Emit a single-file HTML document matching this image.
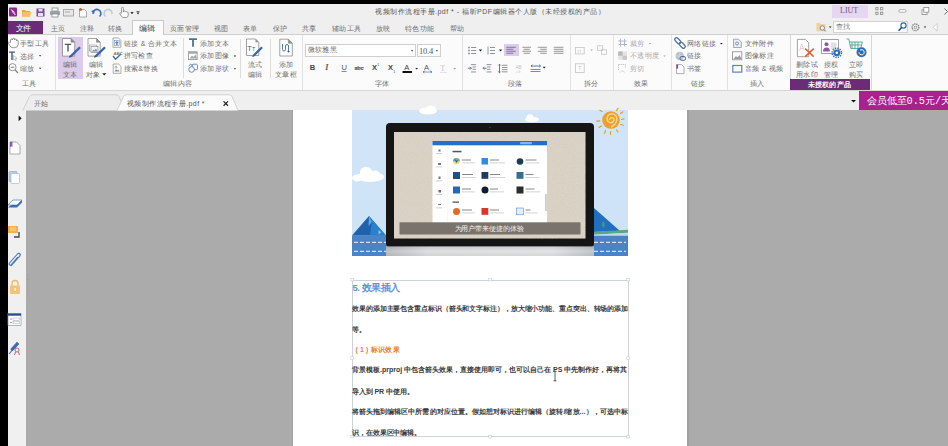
<!DOCTYPE html>
<html><head><meta charset="utf-8">
<style>
*{margin:0;padding:0;box-sizing:border-box}
html,body{width:948px;height:446px;overflow:hidden;background:#000;font-family:"Liberation Sans",sans-serif;position:relative}
.a{position:absolute}
.t{position:absolute;white-space:nowrap;font-size:7px;line-height:10px;letter-spacing:0.4px;color:#6e6e6e}
.sep{position:absolute;width:1px;background:#dcdcdc}
svg{position:absolute;overflow:visible}
.bt{left:352px;color:#3a3a3a;font-weight:bold;letter-spacing:-0.1px}
</style></head><body>
<!-- title bar + tab row bg -->
<div class="a" style="left:8px;top:4px;width:940px;height:30px;background:#efefef"></div>
<!-- ribbon -->
<div class="a" style="left:8px;top:34px;width:940px;height:57px;background:#fbfbfb;border-top:1px solid #cfcfcf;border-bottom:1px solid #d6d6d6"></div>
<!-- doc tab row -->
<div class="a" style="left:8px;top:91px;width:940px;height:19px;background:#efefef"></div>
<!-- sidebar -->
<div class="a" style="left:8px;top:110px;width:18px;height:336px;background:#f0f0f0"></div>
<!-- gray doc area -->
<div class="a" style="left:26px;top:110px;width:922px;height:336px;background:#ababab"></div>
<!-- page -->
<div class="a" style="left:292px;top:110px;width:1px;height:336px;background:#a2a2a2"></div>
<div class="a" style="left:687px;top:110px;width:2px;height:336px;background:#a0a0a0"></div>
<div class="a" style="left:293px;top:110px;width:394px;height:336px;background:#fff"></div>

<!-- TITLE -->
<div class="t" style="left:375px;top:7px;color:#555;letter-spacing:0.5px">视频制作流程手册.pdf * - 福昕PDF编辑器个人版（未经授权的产品）</div>

<!-- TABS -->
<div class="a" style="left:8px;top:21px;width:35px;height:13px;background:#6c2b77"></div>
<div class="t" style="left:15.5px;top:24px;color:#fff;font-size:8px;font-weight:500;letter-spacing:-0.6px">文件</div>
<div class="a" style="left:132px;top:20px;width:32px;height:15px;background:#fbfbfb;border:1px solid #c8c8c8;border-bottom:none"></div>
<div class="t" style="left:51px;top:24px">主页</div>
<div class="t" style="left:80px;top:24px">注释</div>
<div class="t" style="left:108px;top:24px">转换</div>
<div class="t" style="left:139px;top:23.5px;color:#444;font-size:8px;letter-spacing:0">编辑</div>
<div class="t" style="left:170px;top:24px">页面管理</div>
<div class="t" style="left:214px;top:24px">视图</div>
<div class="t" style="left:243px;top:24px">表单</div>
<div class="t" style="left:273px;top:24px">保护</div>
<div class="t" style="left:302px;top:24px">共享</div>
<div class="t" style="left:332px;top:24px">辅助工具</div>
<div class="t" style="left:376px;top:24px">放映</div>
<div class="t" style="left:405px;top:24px">特色功能</div>
<div class="t" style="left:450px;top:24px">帮助</div>



<!-- PAGE IMAGE -->
<svg style="left:0;top:0" width="948" height="446">
 <defs>
  <linearGradient id="sky" x1="0" y1="0" x2="0" y2="1"><stop offset="0" stop-color="#d2e5f8"/><stop offset="1" stop-color="#cde2f6"/></linearGradient>
  <linearGradient id="stand" x1="0" y1="0" x2="0" y2="1"><stop offset="0" stop-color="#b9bcc0"/><stop offset=".5" stop-color="#e2e4e6"/><stop offset="1" stop-color="#c8cacc"/></linearGradient>
  <linearGradient id="standx" x1="0" y1="0" x2="1" y2="0"><stop offset="0" stop-color="#9a9ea4"/><stop offset=".2" stop-color="#d8dadc"/><stop offset=".8" stop-color="#e0e2e4"/><stop offset="1" stop-color="#a8acb0"/></linearGradient>
 </defs>
 <rect x="352" y="110" width="276" height="146" fill="url(#sky)"/>
 <!-- clouds -->
 <g fill="#fff">
  <ellipse cx="428" cy="111" rx="9" ry="3.5"/><ellipse cx="431" cy="109" rx="5" ry="3.5"/>
  <ellipse cx="532" cy="119.5" rx="7" ry="2.8"/><ellipse cx="530" cy="117.5" rx="3.5" ry="3.2"/>
  <ellipse cx="370" cy="177" rx="14" ry="5"/><ellipse cx="366" cy="172" rx="6" ry="5"/><ellipse cx="375" cy="174.5" rx="5" ry="4"/><ellipse cx="357" cy="178" rx="5" ry="3.5"/>
 </g>
 <!-- sun -->
 <g stroke="#d8a030" stroke-width="1.2" fill="none" stroke-linecap="round">
  <path d="M602 111.5 l-2.2-1.2 M599.8 120.8 l-3 .4 M601.5 126 l-2.5 1.5 M605.5 130.5 l-1 2.8 M610.5 131.5 v2.8 M616.5 130 l1.5 2 M620.8 124.5 l2.5 .8 M621.5 119.5 l2.5-.6 M620.5 113.5 l2.3-1.6 M616.5 110.5 l1.5-2.2"/>
 </g>
 <circle cx="611" cy="120" r="8.8" fill="#eba12b"/>
 <path d="M609.5 120 q.5-2.8 3-2.2 q2.5.8 1.2 3.2 q-1.8 2.8-4.8 1 q-3-2-1.2-5.8 q2-3.5 6-2 q3.8 1.8 3 6 q-.8 4.5-5.5 6.8" fill="none" stroke="#fbd98c" stroke-width="1.4"/>
 <!-- water strip -->
 <rect x="352" y="235.5" width="276" height="20.5" fill="#4a84c6"/>
 <path d="M354 242.3 h272 M354 251.3 h272" stroke="#f4f8ff" stroke-width="1" stroke-dasharray="4 2"/>
 <!-- mountains -->
 <path d="M352 235.5 L369 216 L386 235.5z" fill="#1f62ac"/>
 <path d="M369 216 L372 222 L370 235.5 L386 235.5z" fill="#2b80cc"/>
 <path d="M369 216 L372 222 L368.5 226z" fill="#58a8e8"/>
 <path d="M378.5 230 v4.5 l3-2.2z" fill="#8cc4f0"/>
 <path d="M594 208 L620 231 L594 232z" fill="#1f70c0"/>
 <ellipse cx="603.3" cy="224.5" rx="1.5" ry="3" fill="#5a9a80" opacity=".7"/>
 <path d="M594 231.8 L628 229.8 L628 232.8 L594 234.8z" fill="#5aa882"/>
 <path d="M594 234.8 L628 232.8 L628 235.5 L594 235.5z" fill="#b8dcea"/>
 <!-- monitor -->
 <rect x="386" y="123" width="208" height="124" rx="4" fill="#151515"/>
 <rect x="394" y="132" width="191.5" height="106.5" fill="#dbd3c6"/>
 <filter id="paper" x="0" y="0" width="100%" height="100%"><feTurbulence type="fractalNoise" baseFrequency=".9" numOctaves="2" seed="3"/><feColorMatrix values="0 0 0 0 .55  0 0 0 0 .5  0 0 0 0 .42  0 0 0 -1.2 .75"/></filter>
 <rect x="394" y="132" width="191.5" height="106.5" filter="url(#paper)" opacity=".45"/>
 <circle cx="490" cy="127.5" r=".8" fill="#444"/>
 <rect x="386" y="246.5" width="208" height="9.5" fill="url(#standx)"/>
 <rect x="386" y="246.5" width="208" height="9.5" fill="url(#stand)" opacity=".5"/>
 <!-- app window -->
 <rect x="432.5" y="141" width="114.5" height="90" fill="#fff"/>
 <rect x="432.5" y="141" width="114.5" height="4.3" fill="#2470c8"/>
 <rect x="520" y="142" width="12" height="2.3" rx="1" fill="#8ab4e4"/>
 <rect x="447" y="145.3" width=".5" height="80" fill="#f0f0f0"/>
 <g fill="#777">
  <rect x="438.5" y="149.5" width="2" height="2"/><rect x="438" y="163" width="3" height="2"/><rect x="438.5" y="176.5" width="2" height="2.5"/><rect x="438.5" y="190" width="2.5" height="2.5" fill="#9a4a8a"/><rect x="438" y="204" width="3" height="1"/>
 </g>
 <g fill="#c4c4c4">
  <rect x="436" y="153" width="6" height=".8"/><rect x="436" y="166.5" width="6" height=".8"/><rect x="436" y="180.5" width="6" height=".8"/><rect x="436" y="194" width="6" height=".8"/><rect x="436" y="207.5" width="6" height=".8"/>
 </g>
 <rect x="452.5" y="150.8" width="9" height="1.5" fill="#555"/>
 <rect x="452.5" y="201.5" width="6.5" height="1.3" fill="#555"/>
 <g>
  <circle cx="456.5" cy="161.3" r="3.3" fill="#e8d890"/><path d="M456.5 158 a3.3 3.3 0 0 1 3.3 3.3 h-3.3z" fill="#6ab86a"/><path d="M453.2 161.3 a3.3 3.3 0 0 1 3.3-3.3 v3.3z" fill="#3a9ad8"/><path d="M455 160.5 l3 0 l-1.5 2.5z" fill="#555"/>
  <rect x="481.5" y="158" width="6.5" height="6.5" fill="#2b8ee0"/>
  <circle cx="520" cy="161.5" r="3.3" fill="#1e3a50"/>
  <rect x="453" y="172" width="7" height="7" fill="#1f4f8a"/>
  <rect x="481.5" y="172" width="6.8" height="6.8" fill="#223a5c"/>
  <rect x="516.5" y="172" width="7" height="6.8" fill="#3a6c8c"/>
  <rect x="453" y="186.5" width="7" height="7" fill="#1f6ac0"/>
  <circle cx="485" cy="190" r="3.5" fill="#101c30"/>
  <rect x="516.5" y="186.5" width="7" height="7" fill="#2a2e2a"/>
  <circle cx="456.5" cy="211.5" r="3.5" fill="#e86a20"/>
  <rect x="481.5" y="208" width="6.8" height="6.8" fill="#d8382a"/>
  <rect x="516.5" y="208" width="7" height="6.8" fill="#e8eef8" stroke="#3a7ad0" stroke-width=".5"/>
 </g>
 <g fill="#888">
  <rect x="462" y="159.5" width="9" height="1"/><rect x="490" y="159.5" width="9" height="1"/><rect x="525.5" y="159.5" width="11" height="1"/>
  <rect x="462" y="174" width="11" height="1"/><rect x="490" y="174" width="10" height="1"/><rect x="525.5" y="174" width="8" height="1"/>
  <rect x="462" y="188.5" width="9" height="1"/><rect x="490" y="188.5" width="8" height="1"/><rect x="525.5" y="188.5" width="9" height="1"/>
  <rect x="462" y="209.5" width="10" height="1"/><rect x="490" y="209.5" width="9" height="1"/><rect x="525.5" y="209.5" width="5" height="1"/>
 </g>
 <g fill="#c8c8c8">
  <rect x="462" y="162.5" width="13" height=".8"/><rect x="490" y="162.5" width="15" height=".8"/><rect x="525.5" y="162.5" width="14" height=".8"/>
  <rect x="462" y="177" width="14" height=".8"/><rect x="490" y="177" width="15" height=".8"/><rect x="525.5" y="177" width="14" height=".8"/>
  <rect x="462" y="191.5" width="13" height=".8"/><rect x="490" y="191.5" width="14" height=".8"/><rect x="525.5" y="191.5" width="15" height=".8"/>
  <rect x="462" y="212.5" width="13" height=".8"/><rect x="490" y="212.5" width="14" height=".8"/><rect x="525.5" y="212.5" width="12" height=".8"/>
 </g>
 <rect x="545.5" y="194" width=".9" height="17" fill="#999"/>
 <!-- caption -->
 <rect x="399.5" y="222.3" width="181" height="12.2" fill="#7a736b"/>
</svg>
<div class="t" style="left:454.5px;top:224px;color:#f4f2ee;font-size:7px;letter-spacing:-0.1px">为用户带来便捷的体验</div>

<!-- TEXT BLOCK -->
<div class="a" style="left:352px;top:279.5px;width:277px;height:157.5px;border:1px solid #cdd1d8"></div>
<svg style="left:0;top:0" width="948" height="446">
 <g fill="#fff" stroke="#c4c8ce" stroke-width=".6">
  <rect x="350.8" y="278.3" width="2.6" height="2.6"/><rect x="488.8" y="278.3" width="2.6" height="2.6"/><rect x="626.8" y="278.3" width="2.6" height="2.6"/>
  <rect x="350.8" y="356.8" width="2.6" height="2.6"/><rect x="626.8" y="356.8" width="2.6" height="2.6"/>
  <rect x="350.8" y="435.3" width="2.6" height="2.6"/><rect x="488.8" y="435.3" width="2.6" height="2.6"/><rect x="626.8" y="435.3" width="2.6" height="2.6"/>
 </g>
 <path d="M553.5 371.3 h3 M553.5 380.8 h3 M555 371.3 v9.5" stroke="#333" stroke-width=".8"/>
</svg>
<div class="t" style="left:352.5px;top:283px;color:#5e94d6;font-size:9.5px;font-weight:bold;letter-spacing:-0.5px">5. 效果插入</div>
<div class="t bt" style="top:304px">效果的添加主要包含重点标识（箭头和文字标注），放大缩小功能、重点突出、转场的添加</div>
<div class="t bt" style="top:324.5px">等。</div>
<div class="t" style="left:355.5px;top:344.5px;color:#e8802e;font-weight:bold;letter-spacing:0.3px"><span style="letter-spacing:2.2px">(1)</span>标识效果</div>
<div class="t bt" style="top:365px;letter-spacing:0px">背景模板.prproj 中包含箭头效果，直接使用即可，也可以自己在 PS 中先制作好，再将其</div>
<div class="t bt" style="top:386.5px">导入到 PR 中使用。</div>
<div class="t bt" style="top:407px;letter-spacing:0.05px">将箭头拖到编辑区中所需的对应位置。假如想对标识进行编辑（旋转/缩放...），可选中标</div>
<div class="t bt" style="top:428px">识，在效果区中编辑。</div>

<!-- QUICK ACCESS -->
<svg style="left:0;top:0" width="150" height="20">
 <rect x="9" y="7.5" width="8" height="9" rx="1" fill="#8a2b8c"/>
 <path d="M10.5 8.8 q3.5 1.5 5.2 5.8 l-.6 .6 q-3-2.2-4.6-6.4z" fill="#fff"/><path d="M11 9.5 l4.2 5" stroke="#8a2b8c" stroke-width=".4"/>
 <path d="M22 10 h3 l1 1 h4 v5.5 h-8z" fill="#e8a440"/>
 <path d="M22.5 12 h9 l-1.5 4.5 h-8z" fill="#f6c060"/>
 <rect x="36.5" y="8.5" width="8" height="8" fill="#7b4a92"/>
 <rect x="38.5" y="9" width="4" height="2.5" fill="#e8e0ee"/>
 <rect x="38" y="13" width="5" height="3" fill="#e8e0ee"/>
 <rect x="52" y="8" width="6" height="3" fill="#fff" stroke="#8a8a8a" stroke-width=".8"/>
 <rect x="50" y="11" width="10" height="4" rx="1" fill="#9aa0a8"/>
 <rect x="52" y="14" width="6" height="3" fill="#fff" stroke="#8a8a8a" stroke-width=".8"/>
 <rect x="63.5" y="9.5" width="10" height="6.5" fill="#e8e8e8" stroke="#9a9a9a" stroke-width=".8"/>
 <rect x="65" y="11" width="5" height="2" fill="#c8c8c8"/>
 <path d="M79.5 9.5 h5 l2 2 v5.5 h-7z" fill="#fff" stroke="#888" stroke-width=".7"/>
 <circle cx="80.5" cy="9.5" r="1.6" fill="#e0603a"/>
 <path d="M93 14 a4 4 0 1 1 6.5 2.5" fill="none" stroke="#3a6fb0" stroke-width="1.6"/>
 <path d="M91 11 l3 -1 l0.5 3.5z" fill="#3a6fb0"/>
 <path d="M112 14 a4 4 0 1 0 -6.5 2.5" fill="none" stroke="#c0c8d4" stroke-width="1.6"/>
 <path d="M121.6 12.5 v-4.2 q0-1 .9-1 q.9 0 .9 1 v3.7 l.3-.6 q.8-.6 1.5 0 l.2.4 q.8-.5 1.4.1 l.2.3 q.9-.3 1.2.5 v2.5 q0 2.3-2.3 2.3 h-2.2 q-1.4 0-2.2-1.2 l-1.6-2.4 q-.4-.8.3-1 q.6-.2 1.1.4z" fill="#fff" stroke="#777" stroke-width=".75"/>
 <path d="M130.5 12 h3 l-1.5 2z" fill="#333"/>
 <path d="M136.5 12.5 h3 l-1.5 2z" fill="#333"/>
 <rect x="136.5" y="11" width="3" height=".7" fill="#333"/>
</svg>


<div class="a" style="left:58px;top:37px;width:25px;height:42px;background:#dccbe9"></div>
<div class="a" style="left:504px;top:44px;width:15px;height:12px;background:#dccbe9"></div>
<div class="a" style="left:305px;top:43.5px;width:111px;height:13px;background:#fff;border:1px solid #cfcfcf"></div>
<div class="a" style="left:416.5px;top:43.5px;width:24px;height:13px;background:#fff;border:1px solid #cfcfcf"></div>
<!-- RIBBON ICONS -->
<svg style="left:0;top:0" width="948" height="112">
 <g fill="none" stroke="#7a7a7a" stroke-width=".8">
  <!-- hand -->
  <path d="M10.5 42.5 v-2.5 q0-1 1-1 q1 0 1 1 v-0.8 q0-1 1-1 q1 0 1 1 v0.8 q0-1 1-1 q1 0 1 1 v1 q0-.8 .8-.8 q.9 0 .9 1 v3 q0 3.5-3.8 3.5 h-1.5 q-2 0-3-2 l-1.5-2.5 q-.4-.9 .4-1.1 q.7-.1 1.2.6z" fill="#fff"/>
  <!-- magnifier -->
  <circle cx="12.5" cy="67.2" r="3.6"/>
  <path d="M10.8 67.2 h3.4 M15.2 70 l2.8 3" stroke-width="1.1"/>
 </g>
 <path d="M9 51.5 h6 v1.3 h-2.3 v7.2 h-1.4 v-7.2 h-2.3z" fill="#3d5c8c"/>
 <path d="M13.5 55.5 l3.5 2.8 l-1.5.3 l.8 1.5 l-.8.4 l-.8-1.5 l-1.2 .9z" fill="#fff" stroke="#888" stroke-width=".5"/>
 <!-- dropdown arrows -->
 <g fill="#222">
  <path d="M38.8 55.3 h2.6 l-1.3 1.3z"/><path d="M38.8 67.8 h2.6 l-1.3 1.3z"/>
  <path d="M102.2 73.2 h4.2 l-2.1 2.4z"/>
  <path d="M233.7 55.6 h2.5 l-1.25 1.3z"/><path d="M233.7 68.2 h2.5 l-1.25 1.3z"/>
  <path d="M410.8 50.2 h2.7 l-1.35 1.4z"/><path d="M435.5 50.2 h2.7 l-1.35 1.4z"/>
  <path d="M415.2 68 h3 l-1.5 1.5z"/><path d="M453.4 68 h2.7 l-1.35 1.4z" fill="#999"/>
  <path d="M478.8 49.6 h3.3 l-1.65 1.9z"/><path d="M498.9 49.6 h3.3 l-1.65 1.9z"/>
  <path d="M542.7 66.8 h3 l-1.5 1.7z"/>
  <path d="M590.2 49.6 h2.8 l-1.4 1.5z" fill="#aaa"/>
  <path d="M648.8 43 h2.5 l-1.25 1.3z" fill="#999"/><path d="M663.3 55.5 h2.5 l-1.25 1.3z" fill="#999"/>
  <path d="M720 43 h2.6 l-1.3 1.4z"/>
  <path d="M130.5 12 h3 l-1.5 2z" fill="#333"/>
 </g>
 <!-- edit text big icon -->
 <path d="M62.5 38.5 h8.5 l3.7 3.7 v13.9 h-12.2z" fill="#fff" stroke="#8a8a8a" stroke-width=".8"/>
 <path d="M71 38.5 v3.7 h3.7z" fill="#8a8a8a" stroke="#8a8a8a" stroke-width=".6"/>
 <path d="M64.8 43.8 h6.4 v1.3 h-2.5 v6.4 h-1.4 v-6.4 h-2.5z" fill="#555"/>
 <path d="M79.2 46.4 l1.7 1.7 l-9.2 8.8 l-2.3 .7 l.7-2.3z" fill="#3d64a8"/><path d="M69.1 57.6 l.5-1.7 l1.2 1.2z" fill="#333"/>
 <!-- edit object big icon -->
 <path d="M88 38.5 h8.5 l3.7 3.7 v13.9 h-12.2z" fill="#fff" stroke="#8a8a8a" stroke-width=".8"/>
 <path d="M96.5 38.5 v3.7 h3.7z" fill="#8a8a8a" stroke="#8a8a8a" stroke-width=".6"/>
 <rect x="89.5" y="45" width="7" height="6" fill="#fff" stroke="#9a9a9a" stroke-width=".7"/>
 <rect x="91" y="46.5" width="7" height="6" fill="#f4f4f4" stroke="#8a8a8a" stroke-width=".7"/>
 <path d="M92 51.5 l1.5-2 l1 1 l1.5-2 l1.5 3z" fill="#6a8fb8"/>
 <path d="M104.2 46.4 l1.7 1.7 l-9.2 8.8 l-2.3 .7 l.7-2.3z" fill="#3d64a8"/><path d="M94.1 57.6 l.5-1.7 l1.2 1.2z" fill="#333"/>
 <!-- link & merge -->
 <path d="M113 38 h5.5 l2.3 2.3 v7 h-7.8z" fill="#fff" stroke="#8a8a8a" stroke-width=".7"/>
 <rect x="114.6" y="40.6" width="4.6" height="5" fill="#fff" stroke="#6a8ab8" stroke-width=".6"/>
 <path d="M116.9 41 l2 2 h-1.3 v2 h-1.4 v-2 h-1.3z" fill="#4a78b8"/>
 <!-- spell check -->
 <text x="113.5" y="54.5" font-size="4.2" font-family="Liberation Sans" fill="#777" font-weight="bold">ABC</text>
 <path d="M113 56 l2.5 3.2 l5.5-5.2" fill="none" stroke="#3d6aa8" stroke-width="1.3"/>
 <!-- search replace -->
 <path d="M113.2 64 h5.5 l2.3 2.3 v7 h-7.8z" fill="#fff" stroke="#8a8a8a" stroke-width=".7"/>
 <path d="M114.5 71.5 l1.5-2.5 l1.2 1.5 l1-1 l1.5 2z" fill="#888"/>
 <circle cx="116" cy="67.2" r="1" fill="none" stroke="#777" stroke-width=".6"/>
 <!-- T add text -->
 <path d="M189 38.3 h8 v1.7 h-3.1 v6.8 h-1.8 v-6.8 h-3.1z" fill="#4f6f98"/>
 <!-- add image -->
 <rect x="188.5" y="51.8" width="8.6" height="7.8" fill="#fff" stroke="#8a8a8a" stroke-width=".8"/>
 <path d="M189.5 58.5 l2.5-3 l1.5 1.5 l2-2.5 l1.5 4z" fill="#9aa"/>
 <rect x="188.5" y="51.8" width="8.6" height="2" fill="#aaa"/>
 <!-- add shape -->
 <g fill="none" stroke="#5a80b8" stroke-width=".9">
  <rect x="192" y="64.2" width="5.5" height="5.5" rx="1.2"/>
  <circle cx="191.6" cy="69.5" r="2.8" fill="#fbfbfb"/>
  <path d="M188.6 66 l2.2-1.8 l2 1.8"/>
 </g>
 <!-- flow edit -->
 <path d="M246.5 39 h9 l3.3 3.3 v13.2 h-12.3z" fill="#fff" stroke="#8a8a8a" stroke-width=".8"/>
 <path d="M255.5 39 v3.3 h3.3z" fill="#8a8a8a"/><text x="247.3" y="50.5" font-size="7.5" font-family="Liberation Sans" fill="#555">T</text>
 <text x="252" y="50.5" font-size="5.5" font-family="Liberation Sans" fill="#555">T</text>
 <path d="M261.3 46.4 l1.6 1.6 l-8.6 8.4 l-2.2 .7 l.7-2.2z" fill="#3d64a8"/>
 <!-- add article box -->
 <path d="M279.8 39.2 h8.5 l4 4 v12.8 h-12.5z" fill="#fff" stroke="#8a8a8a" stroke-width=".8"/>
 <path d="M288.3 39.2 v4 h4z" fill="#8a8a8a" stroke="#8a8a8a" stroke-width=".6"/>
 <path d="M282.5 44 v5.5 q0 1.5 1.5 1.5 q1.5 0 1.5-1.5 v-3.5 q0-1.5 1.5-1.5 q1.5 0 1.5 1.5 v5" fill="none" stroke="#4a78b8" stroke-width="1"/>
 <path d="M287 51 h3 l-1.5 1.8z" fill="#3a5a88"/>
 <!-- font buttons -->
 <text x="309.8" y="70.3" font-size="7.5" font-weight="bold" font-family="Liberation Sans" fill="#444">B</text>
 <text x="325.3" y="70.3" font-size="8" font-style="italic" font-weight="bold" font-family="Liberation Serif" fill="#555">I</text>
 <text x="341.5" y="70.3" font-size="7.5" font-family="Liberation Sans" fill="#555">U</text>
 <rect x="341.5" y="71.2" width="5" height=".7" fill="#555"/>
 <text x="354.5" y="70.3" font-size="5.6" font-weight="bold" font-family="Liberation Sans" fill="#555" letter-spacing="-.3">abc</text>
 <rect x="354.5" y="67.6" width="9.5" height=".6" fill="#555"/>
 <text x="372" y="70.3" font-size="7.5" font-weight="bold" font-family="Liberation Sans" fill="#444">X</text>
 <text x="377.3" y="66" font-size="3.5" font-family="Liberation Sans" fill="#444">1</text>
 <text x="388" y="70.3" font-size="7.5" font-weight="bold" font-family="Liberation Sans" fill="#444">X</text>
 <text x="393.3" y="72.5" font-size="3.5" font-family="Liberation Sans" fill="#444">1</text>
 <text x="404.2" y="70.2" font-size="7.5" font-family="Liberation Sans" fill="#444">A</text>
 <rect x="402.5" y="71" width="9.5" height="2" fill="#111"/>
 <text x="424" y="70" font-size="7.5" font-family="Liberation Sans" fill="#555">A</text>
 <path d="M423 72 h9 M423 72 l1.3-1 M423 72 l1.3 1 M432 72 l-1.3-1 M432 72 l-1.3 1 M425 70.5 l-1.5 1.5 M430 70.5 l1.5 1.5" stroke="#5a86c0" stroke-width=".8" fill="none"/>
 <text x="440.3" y="70.5" font-size="8" font-family="Liberation Serif" fill="#c8c8c8">T</text>
 <rect x="440" y="72" width="7" height=".6" fill="#cfd8e4"/>
 <!-- paragraph icons -->
 <g fill="#7a8a9a">
  <rect x="468.2" y="46.7" width="1.6" height="1.6"/><rect x="468.2" y="49.7" width="1.6" height="1.6"/><rect x="468.2" y="52.7" width="1.6" height="1.6"/>
 </g>
 <g fill="#8a8a8a">
  <rect x="471" y="47" width="5.2" height=".9"/><rect x="471" y="50" width="5.2" height=".9"/><rect x="471" y="53" width="5.2" height=".9"/>
  <rect x="490" y="47" width="5" height=".9"/><rect x="490" y="50" width="5" height=".9"/><rect x="490" y="53" width="5" height=".9"/>
  <rect x="487.5" y="46.5" width="1" height="8" fill="#8a9aaa"/>
  <rect x="522.4" y="46.8" width="8.6" height=".9"/><rect x="523.6" y="48.8" width="6.2" height=".9"/><rect x="522.4" y="50.8" width="8.6" height=".9"/><rect x="523.6" y="52.8" width="6.2" height=".9"/>
  <rect x="537.8" y="46.8" width="9" height=".9"/><rect x="540.3" y="48.8" width="6.5" height=".9"/><rect x="537.8" y="50.8" width="9" height=".9"/><rect x="540.3" y="52.8" width="6.5" height=".9"/>
  <rect x="553.8" y="46.8" width="9.6" height=".9"/><rect x="553.8" y="48.8" width="9.6" height=".9"/><rect x="553.8" y="50.8" width="9.6" height=".9"/><rect x="553.8" y="52.8" width="9.6" height=".9"/>
 </g>
 <g fill="#7a6a9a">
  <rect x="506.3" y="46.8" width="9.5" height=".9"/><rect x="506.3" y="48.8" width="7" height=".9"/><rect x="506.3" y="50.8" width="9.5" height=".9"/><rect x="506.3" y="52.8" width="7" height=".9"/>
 </g>
 <g fill="#888">
  <rect x="471" y="64.2" width="5" height=".9"/><rect x="472.5" y="66.5" width="3.5" height=".9"/><rect x="472.5" y="68.8" width="3.5" height=".9"/><rect x="471" y="71.5" width="5" height=".9"/>
  <rect x="486.5" y="64.2" width="5" height=".9"/><rect x="487" y="66.5" width="3.5" height=".9"/><rect x="487" y="68.8" width="3.5" height=".9"/><rect x="486.5" y="71.5" width="5" height=".9"/>
  <rect x="502" y="64.8" width="5.5" height=".9"/><rect x="502" y="67" width="5.5" height=".9"/><rect x="502" y="69.2" width="5.5" height=".9"/><rect x="502" y="71.4" width="5.5" height=".9"/>
  <rect x="530.5" y="69" width="10" height="1"/><rect x="530.5" y="71" width="10" height="1"/>
 </g>
 <g fill="none" stroke="#4a70a0" stroke-width=".9">
  <path d="M467.8 68.2 h3.5 M470 66.8 l1.4 1.4 l-1.4 1.4"/>
  <path d="M483 68.2 h3.5 M484.4 66.8 l-1.4 1.4 l1.4 1.4"/>
  <path d="M499.5 64.2 v8.6 M498.2 65.5 l1.3-1.3 l1.3 1.3 M498.2 71.5 l1.3 1.3 l1.3-1.3"/>
  <path d="M531 66 h9.5 M532.3 64.8 l-1.3 1.2 l1.3 1.2 M539.2 64.8 l1.3 1.2 l-1.3 1.2"/>
 </g>
 <text x="515.5" y="69" font-size="4.6" font-family="Liberation Sans" fill="#c4c4c4">AB</text>
 <text x="515.8" y="73.2" font-size="3.2" font-family="Liberation Sans" fill="#b8c8d8">a b</text>
 <!-- split -->
 <g fill="none" stroke="#c4c4c4" stroke-width=".8">
  <rect x="575.6" y="47.5" width="8.6" height="6.4"/>
  <rect x="597.7" y="45.8" width="5" height="4.5"/><rect x="601.5" y="49.8" width="5" height="4.5"/>
  <rect x="575.6" y="63.8" width="8.6" height="8.6"/>
 </g>
 <text x="577" y="52.5" font-size="3.6" font-family="Liberation Sans" fill="#bbb">TT</text>
 <text x="578.3" y="70" font-size="5" font-family="Liberation Sans" fill="#bbb">T</text>
 <!-- effects -->
 <path d="M620.5 38.5 v8 M618.2 41 h8.5 M624.5 38.8 v7.5 M618.5 44.5 h8.5" stroke="#a8b4c4" stroke-width=".9" fill="none"/>
 <rect x="618.2" y="51.5" width="8.8" height="8.3" fill="#e4e4e4"/>
 <rect x="618.2" y="51.5" width="4.4" height="4.2" fill="#b8b8b8"/><rect x="622.6" y="55.7" width="4.4" height="4.1" fill="#c8c8c8"/>
 <path d="M618.5 64.5 h7 v3 M618.5 64.5 v6 M620 72.5 l2-2 l3 2" stroke="#bbb" stroke-width=".8" fill="none" stroke-dasharray="1.4 .8"/>
 <!-- link group -->
 <g transform="rotate(45 680 43)" fill="none" stroke="#4f74a8" stroke-width="1.3">
  <rect x="673.3" y="41.2" width="7" height="3.6" rx="1.8"/>
  <rect x="679.7" y="41.2" width="7" height="3.6" rx="1.8"/>
 </g>
 <circle cx="679.8" cy="56" r="4.3" fill="#b8c0cc"/>
 <path d="M676 56 h7.6 M679.8 52 v8" stroke="#e8e8e8" stroke-width=".6"/>
 <rect x="680" y="56.5" width="5.5" height="3.8" rx="1.5" fill="none" stroke="#3a5a90" stroke-width=".9"/>
 <path d="M676.5 64.6 h5 l2.5 2.5 v6.5 h-7.5z" fill="#fff" stroke="#8a8a8a" stroke-width=".7"/>
 <rect x="676.5" y="64.6" width="1.6" height="4" fill="#7a4a90"/>
 <!-- insert group -->
 <path d="M733.5 39.2 h5 l2.8 2.8 v5.5 h-7.8z" fill="#e8eef4" stroke="#8a8a8a" stroke-width=".7"/>
 <circle cx="737" cy="43.5" r="1.5" fill="none" stroke="#5a7aa8" stroke-width=".7"/>
 <rect x="732.6" y="51.8" width="9.2" height="8" fill="#fff" stroke="#8a8a8a" stroke-width=".8"/>
 <path d="M733.5 59 l2.5-3 l1.5 1.5 l2-2.5 l2 4z" fill="#9a9a9a"/>
 <rect x="732.8" y="65.5" width="9" height="6.6" fill="#fff" stroke="#5a82b8" stroke-width="1.2"/>
 <!-- unlicensed group icons -->
 <path d="M797.4 39.4 h8 l3.3 3.3 v14 h-11.3z" fill="#fff" stroke="#8a8a8a" stroke-width=".8"/>
 <path d="M799.5 51 l2-7 l2.5 6 M800 48.5 h3" stroke="#f0c0c8" stroke-width=".8" fill="none"/>
 <path d="M805.2 48.6 l8.5 8 M813.7 48.6 l-8.5 8" stroke="#e06030" stroke-width="1.5"/>
 <rect x="821.4" y="39.6" width="17" height="13.8" fill="#fff" stroke="#8a8a8a" stroke-width=".8"/>
 <circle cx="826.5" cy="44.2" r="2" fill="#8a5aa8"/>
 <path d="M823 51.5 q0-4 3.5-4 q3.5 0 3.5 4z" fill="#8a5aa8"/>
 <rect x="831" y="42.5" width="5.5" height="7" fill="#e0e0e0"/>
 <circle cx="836.8" cy="52.8" r="3.4" fill="#2e6db4"/>
 <circle cx="836.8" cy="52.8" r="4.6" fill="none" stroke="#2e6db4" stroke-width="1.6" stroke-dasharray="1.3 1.1"/>
 <circle cx="836.8" cy="52.8" r="1.3" fill="#fff"/>
 <g fill="none" stroke="#4aa890" stroke-width=".9">
  <path d="M846.5 39 h2.3 l2 9.5 h10 l1.5-6.5 h-12.8"/>
  <path d="M852 42 v6.5 M855 42 v6.5 M858 42 v6.5 M850 45 h11.5"/>
 </g>
 <circle cx="861.5" cy="52.3" r="5" fill="#2e6db4"/>
 <path d="M859 52.3 a2.6 2.6 0 1 0 1-2.1" fill="none" stroke="#fff" stroke-width="1"/>
</svg>

<!-- RIBBON TEXT -->
<div class="t" style="left:20px;top:39px">手型工具</div>
<div class="t" style="left:20px;top:52px">选择</div>
<div class="t" style="left:20px;top:64px">缩放</div>
<div class="t" style="left:22px;top:79.3px">工具</div>
<div class="sep" style="left:55px;top:35px;height:55px;background:#e2e2e2"></div>

<div class="t" style="left:63px;top:60px">编辑</div>
<div class="t" style="left:63px;top:70px">文本</div>
<div class="t" style="left:89px;top:60px">编辑</div>
<div class="t" style="left:85.5px;top:70px">对象</div>

<div class="t" style="left:123.5px;top:39px">链接 &amp; 合并文本</div>
<div class="t" style="left:123.5px;top:51px">拼写检查</div>
<div class="t" style="left:123.5px;top:64px">搜索&amp;替换</div>
<div class="t" style="left:163px;top:79.3px">编辑内容</div>
<div class="sep" style="left:183px;top:38px;height:40px"></div>
<div class="t" style="left:200px;top:39px">添加文本</div>
<div class="t" style="left:200px;top:51px">添加图像</div>
<div class="t" style="left:200px;top:64px">添加形状</div>
<div class="sep" style="left:239.5px;top:39px;height:39px"></div>
<div class="t" style="left:248px;top:60px">流式</div>
<div class="t" style="left:248px;top:70px">编辑</div>
<div class="sep" style="left:269.5px;top:39px;height:39px"></div>
<div class="t" style="left:279px;top:60px">添加</div>
<div class="t" style="left:275px;top:70px">文章框</div>
<div class="sep" style="left:302px;top:35px;height:55px;background:#e2e2e2"></div>

<div class="t" style="left:307.5px;top:45px;color:#666">微软雅黑</div>
<div class="t" style="left:419px;top:45.5px;color:#555;font-size:8.5px;letter-spacing:-0.2px;font-family:'Liberation Serif',serif">10.4</div>
<div class="t" style="left:374.5px;top:79.3px">字体</div>
<div class="sep" style="left:462px;top:35px;height:55px;background:#e2e2e2"></div>

<div class="t" style="left:508px;top:79.3px">段落</div>
<div class="sep" style="left:570px;top:35px;height:55px;background:#e2e2e2"></div>
<div class="t" style="left:583.5px;top:79.3px">拆分</div>
<div class="sep" style="left:613px;top:35px;height:55px;background:#e2e2e2"></div>

<div class="t" style="left:630px;top:39px;color:#a8a8a8">裁剪</div>
<div class="t" style="left:630px;top:51px;color:#a8a8a8">不透明度</div>
<div class="t" style="left:630px;top:64px;color:#a8a8a8">剪切</div>
<div class="t" style="left:634px;top:79.3px">效果</div>
<div class="sep" style="left:671px;top:35px;height:55px;background:#e2e2e2"></div>

<div class="t" style="left:687px;top:39px">网络链接</div>
<div class="t" style="left:687px;top:51px">链接</div>
<div class="t" style="left:687px;top:64px">书签</div>
<div class="t" style="left:691px;top:79.3px">链接</div>
<div class="sep" style="left:727px;top:35px;height:55px;background:#e2e2e2"></div>

<div class="t" style="left:744.5px;top:39px">文件附件</div>
<div class="t" style="left:744.5px;top:51px">图像标注</div>
<div class="t" style="left:744.5px;top:64px">音频 &amp; 视频</div>
<div class="t" style="left:750px;top:79.3px">插入</div>
<div class="sep" style="left:789.5px;top:34px;height:56px;background:#d6d6d6"></div>
<div class="sep" style="left:870.5px;top:34px;height:56px;background:#d6d6d6"></div>

<div class="t" style="left:796px;top:60px">删除试</div>
<div class="t" style="left:796px;top:69.5px">用水印</div>
<div class="t" style="left:824px;top:60px">授权</div>
<div class="t" style="left:824px;top:69.5px">管理</div>
<div class="t" style="left:849px;top:60px">立即</div>
<div class="t" style="left:849px;top:69.5px">购买</div>
<div class="a" style="left:790px;top:79px;width:80px;height:11px;background:#6c2b77"></div>
<div class="t" style="left:807.5px;top:79.5px;color:#fff;font-weight:bold;letter-spacing:0.3px">未授权的产品</div>

<!-- TOP RIGHT -->
<div class="a" style="left:832px;top:4.5px;width:36px;height:13px;background:#e7d6ef"></div>
<div class="t" style="left:840px;top:6px;color:#6a5a78;font-size:8px;letter-spacing:0px;font-family:'Liberation Serif',serif">LIUT</div>
<div class="a" style="left:833px;top:20.5px;width:75px;height:12.5px;background:#fff;border:1px solid #d2d2d2"></div>
<div class="t" style="left:836px;top:22px;color:#777">查找</div>


<!-- DOC TABS SHAPES -->
<svg style="left:0;top:0" width="948" height="446">
 <path d="M22.8 110.5 L29.5 96.5 Q30.5 94.8 32.5 94.8 L116 94.8 Q118 94.8 119 96.5 L125 110.5" fill="#ededed" stroke="#cdcdcd" stroke-width=".9"/>
 <path d="M117 110.5 L123.5 96.5 Q124.5 94.8 126.5 94.8 L229 94.8 Q231 94.8 232 96.5 L238 110.5" fill="#fbfbfb" stroke="#cdcdcd" stroke-width=".9"/>
 <path d="M223.6 101.4 l4.4 4.4 M228 101.4 l-4.4 4.4" stroke="#222" stroke-width="1.25"/>
 <path d="M851 100 h5 l-2.5 2.6z" fill="#111"/>
 <path d="M18.6 115.4 v5.9 l3-2.95z" fill="#111"/>
 <path d="M28.3 274 v23" stroke="#999" stroke-width=".8" stroke-dasharray="1 1.5"/>
 <!-- sidebar icons -->
 <path d="M10 142 h6.5 l3.5 3.5 v8.5 h-10z" fill="#fff" stroke="#8a8a8a" stroke-width=".7"/>
 <path d="M10 141.8 h2.4 v5.5 l-1.2-1 l-1.2 1z" fill="#8a5aa8"/>
 <rect x="9" y="171.5" width="8" height="10" rx="1" fill="#b8cce4" stroke="#8aa4c8" stroke-width=".6"/>
 <rect x="11" y="173.5" width="8.5" height="10" rx="1" fill="#fff" stroke="#9ab0d0" stroke-width=".6"/>
 <path d="M8 205 l5-5 h9 l-5 5z" fill="#fff" stroke="#6a8ab8" stroke-width=".8"/>
 <path d="M8 207.5 l3-2.5 h6 l5-5 v2.5 l-5 5 h-9z" fill="#3d6db0"/>
 <rect x="8" y="226" width="10" height="7" fill="#f4b050"/>
 <path d="M10 228 h6 M10 230 h6" stroke="#fde8c0" stroke-width=".7"/>
 <path d="M19 232 v5 h-5" fill="none" stroke="#444" stroke-width="1.3"/>
 <path d="M11 266 l8-9 q2-2 1-3 q-1.5-1.5-3 .5 l-7.5 8.5 q-1 1.5 .3 2 q1 .5 2-1 l6-7" fill="none" stroke="#4a78b8" stroke-width="1.1"/>
 <path d="M12 286 v-2.5 q0-3 3-3 q3 0 3 3 v2.5" fill="none" stroke="#f0b860" stroke-width="1.3"/>
 <rect x="10" y="285.5" width="10" height="8.5" rx="1" fill="#f2c47a"/>
 <rect x="14.5" y="288" width="1.2" height="3" fill="#fff"/>
 <rect x="8" y="313.5" width="13" height="12" fill="#fff" stroke="#8a9aaa" stroke-width=".7"/>
 <rect x="8" y="313.5" width="13" height="2.2" fill="#2c4e8a"/>
 <path d="M10 319 h2 M10 322.5 h2" stroke="#888" stroke-width=".8"/>
 <rect x="13" y="318" width="6.5" height="2.3" fill="#fff" stroke="#9aa" stroke-width=".5"/>
 <rect x="13" y="321.5" width="6.5" height="2.3" fill="#fff" stroke="#9aa" stroke-width=".5"/>
 <path d="M9 354 l5-6 M11 349 l6-6.5 l1.5 1.5 l-6 6.5z" stroke="#3a6ab0" stroke-width="1.1" fill="#3a6ab0"/>
 <circle cx="17" cy="350" r="2" fill="none" stroke="#c05070" stroke-width=".9"/>
 <path d="M15.5 352 l-1 3 M18.5 352 l1 3" stroke="#c05070" stroke-width=".9"/>
 <!-- top right -->
 <g fill="none" stroke="#8a8a8a" stroke-width=".8">
  <rect x="875.8" y="7.6" width="2.2" height="2.2"/><rect x="880.6" y="7.6" width="2.2" height="2.2"/>
  <rect x="875.8" y="12.2" width="2.2" height="2.2"/><rect x="880.6" y="12.2" width="2.2" height="2.2"/>
 </g>
 <rect x="898.8" y="9.6" width="7.2" height="2.6" rx="1.1" fill="#fff" stroke="#999" stroke-width=".8"/>
 <rect x="922" y="9.8" width="5" height="4.8" fill="#fff" stroke="#888" stroke-width=".8"/>
 <rect x="923.8" y="7.4" width="5" height="4.8" fill="#fff" stroke="#888" stroke-width=".8"/>
 <path d="M944.5 8.5 l3 3 M944.5 14.5 l3-3" stroke="#666" stroke-width="1"/>
 <path d="M816.5 23 h3 l1 1 h5 v7.2 h-9z" fill="#efd29a"/>
 <circle cx="822.3" cy="28" r="2.2" fill="#f8f8f8" stroke="#6a7a8a" stroke-width=".8"/>
 <path d="M823.9 29.6 l1.8 1.8" stroke="#6a7a8a" stroke-width="1"/>
 <path d="M828.8 26.5 h2.8 l-1.4 1.5z" fill="#222"/>
 <circle cx="903.5" cy="25.5" r="2.6" fill="none" stroke="#2a6ab8" stroke-width="1.2"/>
 <path d="M901.6 27.4 l-3 3.3" stroke="#1a4a80" stroke-width="1.5"/>
 <circle cx="915.5" cy="27.3" r="3.3" fill="#fff" stroke="#666" stroke-width="1.4" stroke-dasharray="1.1 .9"/>
 <circle cx="915.5" cy="27.3" r="1.3" fill="none" stroke="#666" stroke-width=".7"/>
 <path d="M923.8 26.5 h2.4 l-1.2 1.5z" fill="#222"/>
 <path d="M937.2 23.5 v7.5 l-4.2-3.75z" fill="#fff" stroke="#c8c8c8" stroke-width=".8"/>
</svg>

<!-- DOC TABS -->
<div class="t" style="left:34px;top:99px;color:#666">开始</div>
<div class="t" style="left:127px;top:99px;color:#555">视频制作流程手册.pdf *</div>
<div class="a" style="left:859px;top:91px;width:89px;height:19px;background:#a8218d"></div>
<div class="t" style="left:866.5px;top:95.5px;color:#fff;font-size:10.3px;letter-spacing:0px;font-weight:500">会员低至<span style="font-family:'Liberation Mono',monospace">0.5</span>元<span style="font-family:'Liberation Mono',monospace">/</span>天</div>
</body></html>
